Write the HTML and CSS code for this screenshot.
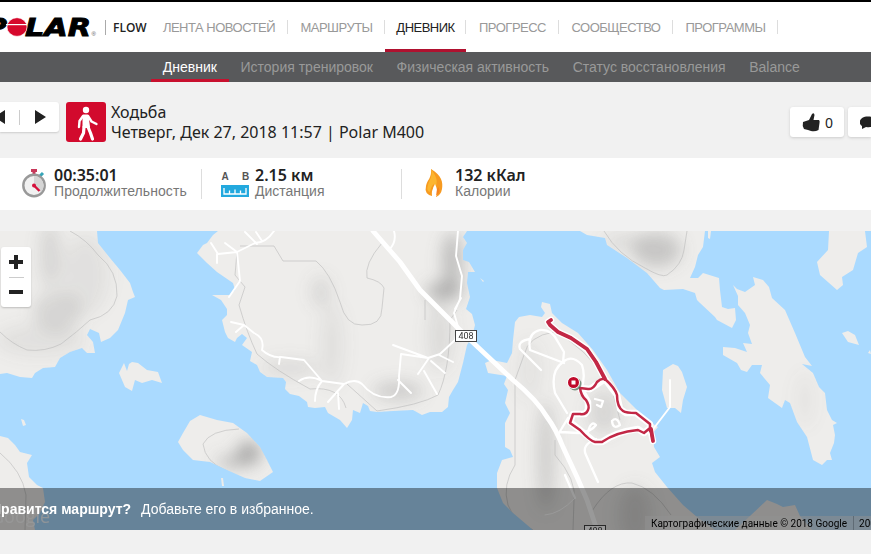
FILE: index.html
```html
<!DOCTYPE html>
<html lang="ru">
  <head>
    <meta charset="UTF-8" />
    <meta name="viewport" content="width=device-width, initial-scale=1.0" />
    <title>Polar Flow</title>
    <link rel="stylesheet" href="styles.css">
  </head>
  <body>
    <header class="header">
      <svg class="logo" width="97" height="24" viewBox="0 0 97 24">
        <g class="logo-text">
          <text x="-14" y="20.600" textLength="21" lengthAdjust="spacingAndGlyphs">P</text>
          <text x="25" y="20.600" textLength="66" lengthAdjust="spacingAndGlyphs">LAR</text>
        </g>
        <ellipse cx="17" cy="12" rx="10" ry="9.3" fill="#d6082c" stroke="#fff" stroke-width=".6" />
        <path d="M6 9.600H27" stroke="#fff" stroke-width="1.2" />
        <text x="91.500" y="20.500" font-size="6" fill="#555">®</text>
      </svg>
      <span class="flow">FLOW</span>
      <nav class="nav">
        <a class="nav-feed">ЛЕНТА НОВОСТЕЙ</a>
        <a class="nav-routes">МАРШРУТЫ</a>
        <a class="nav-diary active">ДНЕВНИК</a>
        <a class="nav-progress">ПРОГРЕСС</a>
        <a class="nav-community">СООБЩЕСТВО</a>
        <a class="nav-programs">ПРОГРАММЫ</a>
      </nav>
    </header>

    <nav class="subnav">
      <a class="active">Дневник</a>
      <a>История тренировок</a>
      <a>Физическая активность</a>
      <a>Статус восстановления</a>
      <a>Balance</a>
    </nav>

    <section class="session">
      <div class="pager">
        <svg width="59" height="30" viewBox="0 0 59 30">
          <path d="M-6 15L5 8V22ZM35 8L46 15L35 22Z" fill="#222" />
          <path d="M19.500 8V23" stroke="#ccc" />
        </svg>
      </div>
      <div class="sport">
        <svg width="40" height="40" viewBox="0 0 40 40" fill="none" stroke="#fff" stroke-linecap="round" stroke-linejoin="round">
          <circle cx="20" cy="8" r="3.200" fill="#fff" stroke="none" />
          <path d="M17.500 13.500H21.500L23 25H17.500Z" fill="#fff" stroke-width="2" />
          <path d="M17 14L13.500 19L13 25M22 14L25.500 19.500L30.500 22" stroke-width="2.400" />
          <path d="M18 25L17.500 31L14.500 37M22 25L24.500 31L26.500 37" stroke-width="3.200" />
        </svg>
      </div>
      <div class="session-title">
        <div>Ходьба</div>
        <div class="session-date">Четверг, Дек 27, 2018 11:57 | Polar M400</div>
      </div>
      <div class="actions">
        <div class="action">
          <svg width="18" height="20" viewBox="0 0 18 20">
            <path d="M1 10L7 8L10 2Q12 0 12.500 3L11.500 8H17Q18 9 17.500 11L16.500 18Q13 20 9 19L6 18L2 17Q0 14 1 10Z" fill="#222" />
          </svg>
          <span>0</span>
        </div>
        <div class="action action-comment">
          <svg width="18" height="20" viewBox="0 0 18 20">
            <path d="M8 4.500C-1 4.500-2 12 2 14V17L6 15C12 16 17 14 17 10S13 4.500 8 4.500Z" fill="#222" />
          </svg>
        </div>
      </div>
    </section>

    <section class="stats">
      <div class="stat">
        <svg class="stat-icon" width="34" height="32" viewBox="0 0 34 32">
          <path d="M14 2.500H20M17 2V6" stroke="#c8385a" stroke-width="3" />
          <path d="M23 8L26 5" stroke="#37a5b8" stroke-width="3" />
          <circle cx="17" cy="17.500" r="10.700" fill="#f1f1f1" stroke="#999" stroke-width="2.400" />
          <path d="M17 17.500V8A9.500 9.500 0 0 1 24 24Z" fill="#d5d5d5" />
          <path d="M17 17.500L22.500 23" stroke="#d5103c" stroke-width="2.400" />
          <circle cx="17" cy="17.500" r="2" fill="#d5103c" />
        </svg>
        <div>
          <div class="stat-value">00:35:01</div>
          <div class="stat-label stat-label-time">Продолжительность</div>
        </div>
      </div>
      <div class="stat">
        <svg class="stat-icon" width="34" height="32" viewBox="0 0 34 32">
          <g class="ruler-text"><text x="0.500" y="11.500">A</text><text x="21" y="11.500">B</text></g>
          <path d="M0 17H28V29H0Z" fill="#23a9de" />
          <path d="M3 20V26H25V20M8.500 26V22.500M14 26V21.500M19.500 26V22.500" fill="none" stroke="#fff" stroke-width="1.300" />
        </svg>
        <div>
          <div class="stat-value">2.15 км</div>
          <div class="stat-label">Дистанция</div>
        </div>
      </div>
      <div class="stat">
        <svg class="stat-icon" width="34" height="32" viewBox="0 0 34 32">
          <path d="M10 1C21 8 22 14 21 21Q20 27 15 29Q16 23 13 18Q12 24 11 28Q3 26 5 18C6 12 11 10 10 1Z" fill="#f79a20" />
          <path d="M10 1C15 8 17 12 15 18L13 16Q10 18 9 24Q5 23 7 17C8 12 12 9 10 1Z" fill="#fcb52f" />
          <path d="M14 16Q10 23 11 28H16Q17 22 14 16Z" fill="#fff" />
          <path d="M16 21L17.500 19Q20 25 15 28Z" fill="#f58220" />
        </svg>
        <div>
          <div class="stat-value">132 кКал</div>
          <div class="stat-label">Калории</div>
        </div>
      </div>
    </section>

    <section class="map">
      <svg class="map-canvas" width="871" height="299" viewBox="0 231 871 299">
        <defs>
          <filter id="soft" x="-80%" y="-80%" width="260%" height="260%"><feGaussianBlur stdDeviation="8" /></filter>
          <clipPath id="land">
            <path d="M0 231H97L98 243L110 258L120 270L130 283L133 292L135 297L128 300L125 313L118 330L110 338L101 342L99 333L90 329L87 335L93 342L95 353L87 353L82 348L70 352L60 358L55 367L43 368L35 373L32 378L20 377L7 373L0 374Z" />
            <path d="M0 436L8 438L15 445L20 452L32 455L27 463L29 477L37 485L43 488L45 502L40 513L33 520L35 530H0Z" />
            <path d="M21 419L24 420L26 425L23 426ZM221 478H223L224 486H222Z" />
            <path d="M119 373L124 363L127 371L129 364L132 362L138 363L147 370L158 372L162 383L152 380L142 383L135 380L132 391L125 387Z" />
            <path d="M200 415L190 421L183 433L178 442L183 450L193 460L210 462L227 470L245 478L260 481L273 472L267 460L260 447L247 433L233 423L217 420Z" />
            <path d="M218 231L213 235L207 243L203 245L197 253L207 263L217 272L233 283L235 290L230 295H212L221 300L227 309L227 315L222 320L225 332L228 338L235 342L237 338L242 334L247 338L242 345L252 352L250 361L257 365L260 372L267 377L283 378L286 382L285 389L290 394L299 396L307 402L308 407L315 408L325 407L328 413L340 420L347 428L352 420L353 410L360 413L363 403L368 406L370 411L377 412L393 411L413 410L422 415L430 412L442 412L448 407L449 397L453 390L458 382L463 363L467 345L472 337L475 325L472 314L466 309L470 297L467 283L468 272L475 272L469 262L463 260V250L467 243L463 237L467 231Z" />
            <path d="M542 302L550 304L552 313L562 323L578 333L593 350L607 370L620 393L637 410L650 422L658 427L653 433L654 447L660 457L652 463L655 472L667 487L683 505L697 517L715 530H533L513 513L503 503L497 488V473L502 460L513 457L510 450L505 447V423L510 413L505 403L508 390L504 384L507 376L488 373L485 363L492 360L507 363L512 353L513 340L515 322L519 317L530 315L542 317L545 313L541 307Z" />
            <path d="M580 231L587 235L605 238L607 245L627 258L647 273L660 288L664 290L683 289L695 293L697 300L700 303L715 317L717 320L732 328L736 320L735 308L728 309L722 307L720 290L719 278L703 273L698 278L690 278L695 267L698 255L703 247L705 231ZM708 231H711L710 239L708 238Z" />
            <path d="M733 285L737 289L745 292L755 285L753 277L763 280L769 287L772 298L785 310L795 333L805 357L812 366L802 364L813 373L819 387L825 393L827 410L832 420L837 423L833 425L835 435L834 443L830 453L832 460L827 460L822 465L813 460L807 437L797 422L790 403L785 400L782 408L768 398L770 385L760 373L762 365H752L747 372L741 370L737 363L723 355V347L735 348L747 352L743 343L752 344L748 333L750 325L745 313L738 305V296Z" />
            <path d="M829 231L828 250L817 262L820 275L837 290L843 285L842 277L853 270L858 253L867 247L865 231Z" />
            <path d="M842 333L848 331L855 335L859 345L848 342ZM870 350L868 353L871 354Z" />
            <path d="M673 364L678 366L682 372L687 387L683 400L681 413L675 408H667L662 390L663 370Z" />
            <path d="M735 530L750 516L767 500L777 504L783 507L795 505L800 516L812 530Z" />
            <path d="M480 278L484 281L483 282Z" />
          </clipPath>
        </defs>
        <rect y="231" width="871" height="299" fill="#aadaff" />

        <g clip-path="url(#land)">
          <rect y="231" width="871" height="299" fill="#eeedeb" />
          <!-- hill shading -->
          <g fill="#777" filter="url(#soft)">
            <ellipse cx="57" cy="312" rx="24" ry="20" opacity=".2" />
            <ellipse cx="50" cy="255" rx="10" ry="34" opacity=".2" />
            <ellipse cx="40" cy="340" rx="45" ry="16" opacity=".1" />
            <ellipse cx="85" cy="275" rx="24" ry="40" opacity=".1" />
            <ellipse cx="249" cy="453" rx="12" ry="12" opacity=".55" />
            <ellipse cx="232" cy="462" rx="16" ry="6" opacity=".4" />
            <ellipse cx="444" cy="291" rx="18" ry="9" opacity=".5" />
            <ellipse cx="452" cy="262" rx="10" ry="30" opacity=".4" />
            <ellipse cx="440" cy="335" rx="12" ry="36" opacity=".15" />
            <ellipse cx="321" cy="292" rx="10" ry="16" opacity=".16" />
            <ellipse cx="332" cy="345" rx="12" ry="42" opacity=".1" />
            <ellipse cx="398" cy="391" rx="25" ry="9" opacity=".28" />
            <ellipse cx="290" cy="368" rx="30" ry="9" opacity=".14" />
            <ellipse cx="546" cy="455" rx="8" ry="55" opacity=".28" />
            <ellipse cx="604" cy="412" rx="16" ry="22" opacity=".18" />
            <ellipse cx="530" cy="370" rx="12" ry="30" opacity=".08" />
            <ellipse cx="657" cy="250" rx="24" ry="17" opacity=".32" />
            <ellipse cx="625" cy="242" rx="22" ry="8" opacity=".15" />
            <ellipse cx="635" cy="515" rx="17" ry="30" opacity=".16" />
            <ellipse cx="805" cy="400" rx="10" ry="28" opacity=".06" />
          </g>
          <g class="contour">
            <path d="M70 231Q87 240 98 255Q118 271 117 296Q113 315 90 320Q77 332 61 344Q45 352 27 350Q12 344 0 332" />
            <path d="M0 453Q22 471 26 495L25 530M239 429Q210 430 203 444Q205 462 227 471" />
            <path d="M240 246H274L283 261L316 261Q330 272 340 302Q346 326 362 325Q382 326 382 308L384 288Q381 281 367 278Q364 264 382 243M237 252L235 275L245 287L239 305Q247 333 257 354Q275 370 310 389Q340 386 346 408M347 384L377 411Q420 405 438 395Q450 370 450 320L457 310M425 300V320" />
            <path d="M554 332Q528 336 524 355L515 380V465Q502 485 508 505Q514 521 533 530M554 332Q584 345 611 386L620 420M555 440V455Q577 480 574 500L573 530M592 511Q611 481 632 483Q653 488 671 515" />
            <path d="M604 231Q618 255 645 268Q662 278 667 275Q682 265 684 250L687 231" />
          </g>
        </g>

        <g class="road">
          <path d="M274 231Q266 243 255 243L237 252L218 254L211 243M225 243L237 252M217 254V263M245 232L257 244M256 232L262 241M237 252L240 281L229 297M231 322L244 325L254 333Q265 338 262 350Q271 358 281 357L304 360L322 381L344 384Q355 378 362 384Q374 399 391 397Q400 395 399 376L401 354L428 358L440 354L455 340L457 330M299 381Q309 374 322 381M322 381Q315 389 315 401M344 384L328 402M338 393L339 409M280 357L279 364M244 325L236 332M393 345L428 358M429 358L418 374M431 361L445 373M439 355L453 362M424 371L437 394M398 380L411 393" />
          <path d="M394 231Q397 242 389 250M458 231L456 256L462 276L460 299L454 313L459 330M461 298L455 309" />
          <path class="road-local" d="M541 370L520 349Q517 341 530 339M564 363L530 350Q527 333 540 330Q552 329 558 342L564 352L563 362Q550 371 555 393L567 413M563 362Q572 354 582 365Q586 377 581 390M559 433L568 418M560 432L579 433Q591 432 596 425Q591 420 588 432M612 421Q617 416 620 425Q613 430 612 421M595 399L603 401L601 407L597 405M596 439Q581 445 586 455L598 482M565 475L575 498" />
          <path class="road-faint" d="M575 498Q560 514 545 515" />
          <path d="M654 428L670 407V380" />
          <path class="road-main" d="M373 231L400 262L420 290L443 313L466 336L513 380Q537 400 547 417Q556 429 563 447L577 477L587 500L597 530" />
        </g>

        <g class="track">
          <path class="track-casing" d="M551 320L548 322L550 325L558 332L571 338L587 349L596 362L605 379L590 389L580 388L588 402V410L585 414L573 414L570 422L580 430L595 442L602 442Q616 432 638 429L644 433L650 428L653 441M605 379L617 395L620 409L626 413H636L650 424V431" />
          <path class="track-line" d="M551 320L548 322L550 325L558 332L571 338L587 349L596 362L605 379Q601 378 597 382Q593 390 588 389L580 388Q581 396 586 400Q590 406 588 410Q586 415 580 414L573 414L570 423L580 430Q590 441 595 442L602 442Q616 432 638 430L644 433L650 428L653 441M605 379Q615 388 617 395Q617 407 623 411Q626 413 636 413L650 424V431" />
          <path class="track-thick" d="M551 320L548 322L550 325L558 332L571 338L587 349L596 362L605 379M651 429L653 441" />
        </g>
        <circle cx="575" cy="384" r="6.500" fill="#496b54" opacity=".7" />
        <circle cx="573.500" cy="382.500" r="6.500" fill="#fff" />
        <circle cx="573.500" cy="382.500" r="5.500" fill="#bf0a2b" />
        <rect x="571.500" y="380.500" width="4" height="4" fill="#fff" />

        <g class="shield">
          <rect x="455.500" y="330.500" width="21" height="11" />
          <text x="466" y="339.300">408</text>
          <rect x="584.500" y="525.500" width="21" height="11" />
          <text x="595" y="534.300">408</text>
        </g>
        <text class="google" x="-9" y="522.500">Google</text>
      </svg>

      <div class="zoom">
        <svg width="30" height="60" viewBox="0 0 30 60">
          <path d="M8 15H22M15 8V22M8 45H22" stroke="#222" stroke-width="4" />
          <path d="M8 30.500H23" stroke="#ccc" />
        </svg>
      </div>
      <div class="credits"><span>Картографические данные © 2018 Google</span><span class="credits-scale">200 м</span></div>
      <div class="favorite"><b>Нравится маршрут?</b><span>Добавьте его в избранное.</span></div>
    </section>
  </body>
</html>
```

FILE: styles.css
```css
body {
  margin: 0;
  background: #f1f1f1;
  font-family: "Liberation Sans", Arial, sans-serif;
  color: #222;
  overflow: hidden;
  height: 554px;
}

.header {
  display: flex;
  height: 50px;
  border-top: 2px solid #000;
  background: #fff;
  align-items: center;
}

.logo {
  flex: none;
}

.logo-text {
  font: italic bold 24px "DejaVu Sans", sans-serif;
  fill: #000;
  stroke: #000;
  stroke-width: .9px;
}

.flow {
  margin-left: 8px;
  padding-left: 7px;
  width: 37px;
  border-left: 1px solid #aaa;
  font: 600 12px/15px "Open Sans", sans-serif;
}

.nav {
  display: flex;
  height: 50px;
}

.nav a {
  position: relative;
  box-sizing: border-box;
  line-height: 51px;
  font-size: 13px;
  letter-spacing: -.5px;
  text-align: center;
  white-space: nowrap;
  color: #999;
}

.nav a::after {
  content: "";
  position: absolute;
  right: 0;
  top: 18px;
  width: 1px;
  height: 14px;
  background: #ddd;
}

.nav .active {
  color: #222;
  border-bottom: 3px solid #b0112f;
}

.nav-feed { width: 138px; }
.nav-routes { width: 97px; }
.nav-diary { width: 81px; }
.nav-progress { width: 93px; }
.nav-community { width: 114px; }
.nav-programs { width: 105px; }

.subnav {
  display: flex;
  height: 30px;
  padding-left: 151px;
  background: #58595b;
}

.subnav a {
  box-sizing: border-box;
  height: 30px;
  padding: 0 11.8px;
  line-height: 31px;
  font-size: 14px;
  color: #999;
  white-space: nowrap;
}

.subnav .active {
  color: #fff;
  border-bottom: 3px solid #c8102e;
}

.session {
  display: flex;
  height: 56px;
  padding-top: 20px;
}

.pager {
  width: 59px;
  height: 30px;
  background: #fff;
  border-radius: 0 3px 3px 0;
  box-shadow: 0 1px 2px #ccc;
}

.sport {
  width: 40px;
  height: 40px;
  margin-left: 7px;
  border-radius: 3px;
  background: #d20a2d;
}

.session-title {
  margin-left: 5px;
  font: 16px/20px "Noto Sans", sans-serif;
  white-space: nowrap;
}

.actions {
  display: flex;
  gap: 4px;
  margin-left: auto;
  padding-top: 5px;
}

.action {
  display: flex;
  box-sizing: border-box;
  width: 54px;
  height: 30px;
  padding-left: 12px;
  gap: 5px;
  align-items: center;
  background: #fff;
  border-radius: 3px;
  box-shadow: 0 1px 3px #ccc;
  font: 14px "Noto Sans", sans-serif;
}

.action svg {
  flex: none;
}

.action-comment {
  width: 23px;
  border-radius: 3px 0 0 3px;
}

.stats {
  display: flex;
  height: 52px;
  background: #fff;
}

.stat {
  display: flex;
  box-sizing: border-box;
  width: 200px;
  height: 30px;
  margin-top: 11px;
  padding-left: 19px;
  border-left: 1px solid #ddd;
}

.stat:first-child {
  width: 201px;
  border: 0;
  padding-left: 17px;
}

.stat-icon {
  margin-top: -1px;
  flex: none;
}

.stat:first-child .stat-icon {
  margin-right: 3px;
}

.stat-value {
  margin-top: -4px;
  font: 600 16px/20px "Noto Sans", sans-serif;
}

.stat-label {
  margin-top: -1px;
  font-size: 14px;
  line-height: 14px;
  color: #777;
}

.stat-label-time {
  letter-spacing: .07px;
}

.ruler-text {
  font: bold 10px "Liberation Sans", sans-serif;
  fill: #555;
}

.map {
  position: relative;
  height: 299px;
  margin-top: 21px;
  overflow: hidden;
}

.map-canvas {
  display: block;
}

.contour {
  fill: none;
  stroke: #bbb;
  stroke-width: .6;
}

.road {
  fill: none;
  stroke: #fff;
  stroke-width: 1.9;
  stroke-linejoin: round;
  stroke-linecap: round;
}

.road-local {
  stroke-width: 2.3;
}

.road-faint {
  stroke-width: 1;
}

.road-main {
  stroke-width: 4.8;
}

.track {
  fill: none;
  stroke-linejoin: round;
  stroke-linecap: round;
}

.track-casing {
  stroke: #fff;
  stroke-width: 6.5;
}

.track-line {
  stroke: #c22846;
  stroke-width: 2.5;
}

.track-thick {
  stroke: #c22846;
  stroke-width: 4;
}

.track-thick {
  stroke-width: 3.8;
}

.shield rect {
  fill: #fff;
  stroke: #444;
}

.shield text {
  font: 9px Roboto, sans-serif;
  fill: #333;
  text-anchor: middle;
}

.google {
  font: 18px "Open Sans", sans-serif;
  fill: #fff;
  opacity: .8;
}

.zoom {
  position: absolute;
  left: 1px;
  top: 16px;
  width: 30px;
  height: 60px;
  border-radius: 3px;
  background: #fff;
  box-shadow: 0 1px 2px rgba(0, 0, 0, .2);
}

.credits {
  position: absolute;
  right: 0;
  bottom: 0;
  display: flex;
  box-sizing: border-box;
  width: 226px;
  height: 14px;
  padding-left: 6px;
  background: rgba(245, 245, 245, .5);
  font: 10px/15px Roboto, sans-serif;
  color: #000;
  white-space: nowrap;
}

.credits-scale {
  margin-left: 6px;
  padding-left: 5px;
  border-left: 1px solid #9fb3c4;
}

.favorite {
  position: absolute;
  left: 0;
  right: 0;
  bottom: 0;
  display: flex;
  height: 42px;
  line-height: 42px;
  font-size: 14px;
  color: #fff;
  background: rgba(0, 0, 0, .4);
}

.favorite b {
  margin-left: -9px;
  margin-right: 10px;
}
```
